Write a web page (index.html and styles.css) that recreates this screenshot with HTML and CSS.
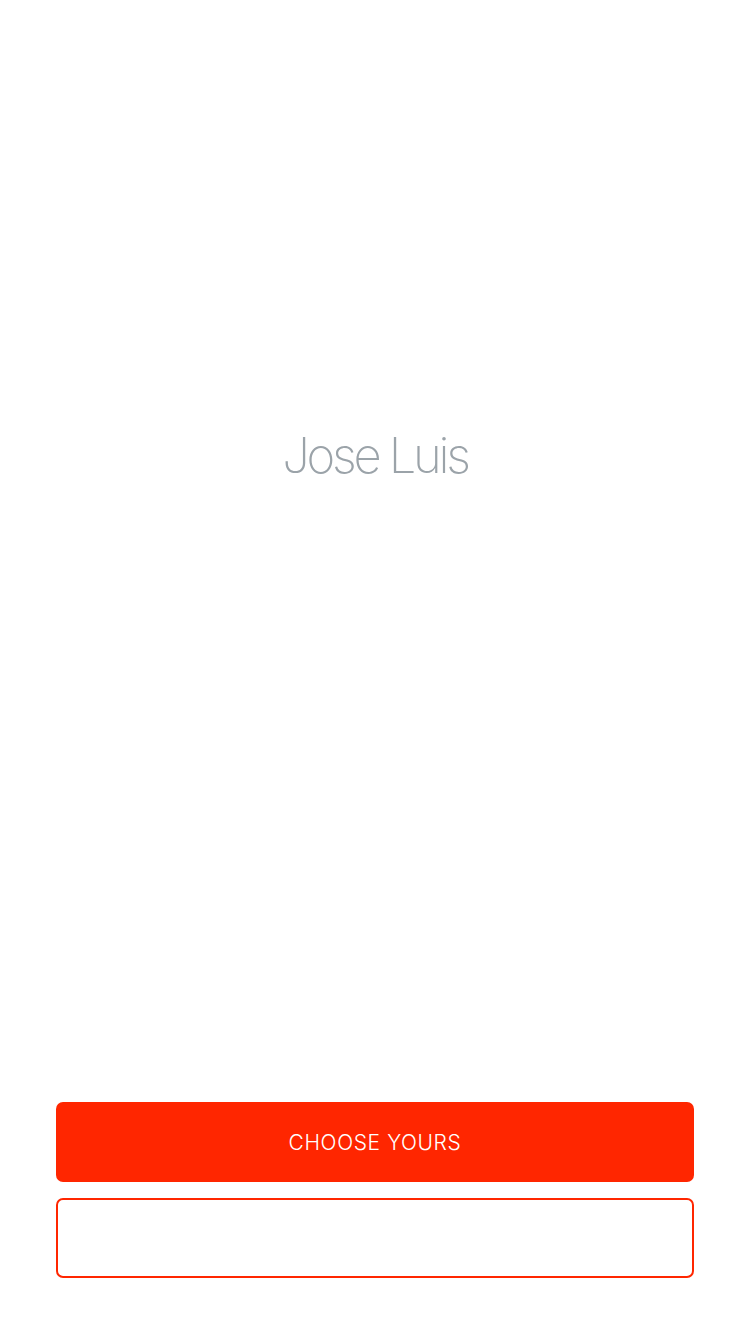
FILE: index.html
```html
<!DOCTYPE html>
<html>
<head>
<meta charset="utf-8">
<link rel="stylesheet" href="styles.css">
</head>
<body>
<div class="screen">
  <div class="hero">
    <h1 class="name">Jose Luis</h1>
  </div>
  <div class="actions">
    <button class="btn btn-primary">CHOOSE YOURS</button>
    <button class="btn btn-outline"></button>
  </div>
</div>
</body>
</html>
```
FILE: styles.css
```css
* { box-sizing: border-box; }
html, body { margin: 0; padding: 0; background: #fff; }
.screen {
  width: 750px;
  height: 1334px;
  display: flex;
  flex-direction: column;
  font-family: Inter, Roboto, "Liberation Sans", sans-serif;
}
.hero {
  flex: 1;
  padding-top: 424px;
  display: flex;
  justify-content: center;
  align-items: flex-start;
}
.name {
  margin: 0;
  font-size: 49px;
  line-height: 64px;
  font-weight: 200;
  color: #9ba3a9;
  letter-spacing: -3.3px;
}
.actions {
  padding: 0 56px 56px;
  display: flex;
  flex-direction: column;
  gap: 16px;
}
.btn {
  height: 80px;
  border-radius: 7px;
  font-family: Inter, Roboto, "Liberation Sans", sans-serif;
  font-size: 21px;
  font-weight: 300;
  letter-spacing: 0.6px;
  padding: 0;
  display: flex;
  align-items: center;
  justify-content: center;
}
.btn-primary {
  background: #ff2600;
  color: #fff;
  border: none;
}
.btn-outline {
  background: #fff;
  border: 2px solid #ff2600;
}
```
